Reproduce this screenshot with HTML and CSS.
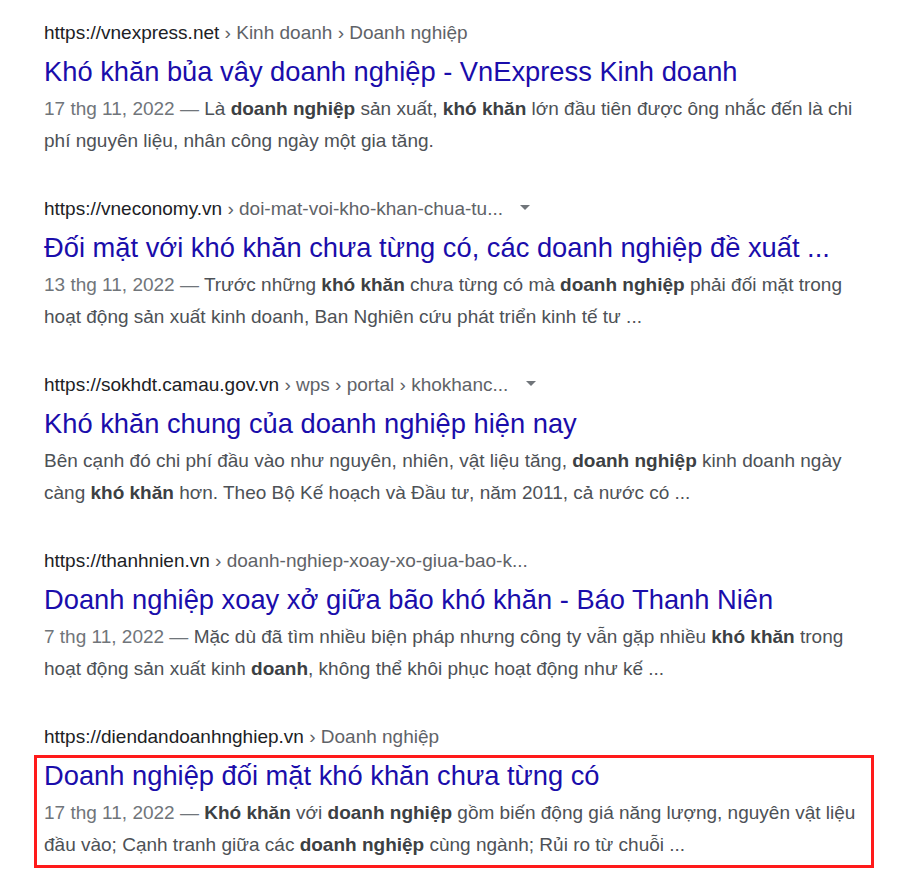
FILE: index.html
```html
<!DOCTYPE html>
<html lang="vi">
<head>
<meta charset="utf-8">
<title>Kết quả tìm kiếm</title>
<link rel="stylesheet" href="styles.css">
</head>
<body>
<div class="results">
  <div class="result">
    <div class="url"><span class="domain">https://vnexpress.net</span> › Kinh doanh › Doanh nghiệp</div>
    <div class="body">
      <a class="title">Khó khăn bủa vây doanh nghiệp - VnExpress Kinh doanh</a>
      <div class="snippet"><span class="date">17 thg 11, 2022 — </span>Là <b>doanh nghiệp</b> sản xuất, <b>khó khăn</b> lớn đầu tiên được ông nhắc đến là chi phí nguyên liệu, nhân công ngày một gia tăng.</div>
    </div>
  </div>
  <div class="result">
    <div class="url"><span class="domain">https://vneconomy.vn</span> › doi-mat-voi-kho-khan-chua-tu... <span class="caret"></span></div>
    <div class="body">
      <a class="title">Đối mặt với khó khăn chưa từng có, các doanh nghiệp đề xuất ...</a>
      <div class="snippet"><span class="date">13 thg 11, 2022 — </span>Trước những <b>khó khăn</b> chưa từng có mà <b>doanh nghiệp</b> phải đối mặt trong hoạt động sản xuất kinh doanh, Ban Nghiên cứu phát triển kinh tế tư ...</div>
    </div>
  </div>
  <div class="result">
    <div class="url"><span class="domain">https://sokhdt.camau.gov.vn</span> › wps › portal › khokhanc... <span class="caret"></span></div>
    <div class="body">
      <a class="title">Khó khăn chung của doanh nghiệp hiện nay</a>
      <div class="snippet">Bên cạnh đó chi phí đầu vào như nguyên, nhiên, vật liệu tăng, <b>doanh nghiệp</b> kinh doanh ngày càng <b>khó khăn</b> hơn. Theo Bộ Kế hoạch và Đầu tư, năm 2011, cả nước có ...</div>
    </div>
  </div>
  <div class="result">
    <div class="url"><span class="domain">https://thanhnien.vn</span> › doanh-nghiep-xoay-xo-giua-bao-k...</div>
    <div class="body">
      <a class="title">Doanh nghiệp xoay xở giữa bão khó khăn - Báo Thanh Niên</a>
      <div class="snippet"><span class="date">7 thg 11, 2022 — </span>Mặc dù đã tìm nhiều biện pháp nhưng công ty vẫn gặp nhiều <b>khó khăn</b> trong hoạt động sản xuất kinh <b>doanh</b>, không thể khôi phục hoạt động như kế ...</div>
    </div>
  </div>
  <div class="result">
    <div class="url"><span class="domain">https://diendandoanhnghiep.vn</span> › Doanh nghiệp</div>
    <div class="body highlight">
      <a class="title">Doanh nghiệp đối mặt khó khăn chưa từng có</a>
      <div class="snippet"><span class="date">17 thg 11, 2022 — </span><b>Khó khăn</b> với <b>doanh nghiệp</b> gồm biến động giá năng lượng, nguyên vật liệu đầu vào; Cạnh tranh giữa các <b>doanh nghiệp</b> cùng ngành; Rủi ro từ chuỗi ...</div>
    </div>
  </div>
</div>
</body>
</html>
```

FILE: styles.css
```css
html, body {
  margin: 0;
  padding: 0;
  background: #ffffff;
}
body {
  font-family: "Liberation Sans", Arial, sans-serif;
}
.results {
  padding: 21px 0 0 44px;
  display: flex;
  flex-direction: column;
  gap: 41px;
}
.result {
  display: flex;
  flex-direction: column;
}
.url {
  font-size: 19px;
  line-height: 24px;
  color: #5f6368;
  white-space: nowrap;
}
.domain {
  color: #202124;
}
.caret {
  display: inline-block;
  width: 0;
  height: 0;
  margin-left: 12px;
  border-left: 5px solid transparent;
  border-right: 5px solid transparent;
  border-top: 5px solid #70757a;
  vertical-align: middle;
  position: relative;
  top: -2px;
}
.body {
  display: flex;
  flex-direction: column;
  padding-top: 10px;
}
.title {
  font-size: 27.3px;
  line-height: 34px;
  color: #1a0dab;
  white-space: nowrap;
  text-decoration: none;
}
.snippet {
  font-size: 19px;
  line-height: 31.5px;
  color: #4d5156;
  width: 824px;
  padding-top: 4px;
}
.snippet b {
  color: #3c4043;
}
.date {
  color: #70757a;
}
.highlight {
  box-sizing: border-box;
  margin-left: -10px;
  width: 840px;
  border: 3px solid #ff1a1a;
  padding: 1px 3px 5px 7px;
  margin-top: 6px;
}
```
